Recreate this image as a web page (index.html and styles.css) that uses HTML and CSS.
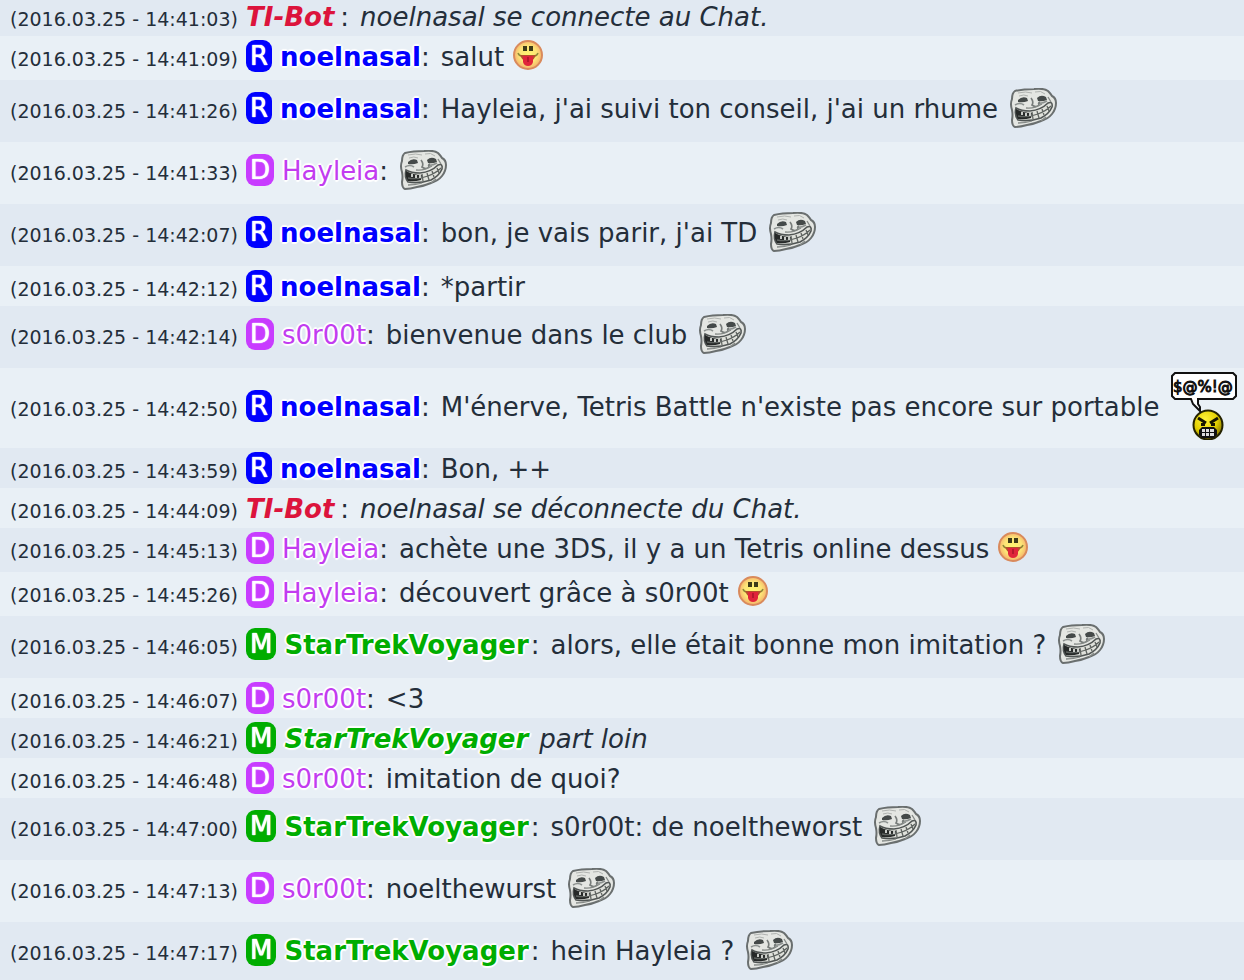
FILE: index.html
```html
<!DOCTYPE html>
<html lang="fr">
<head>
<meta charset="utf-8">
<meta name="viewport" content="width=device-width, initial-scale=1">
<title>Chat</title>
<link rel="stylesheet" href="styles.css">
</head>
<body>
<svg class="sprites" aria-hidden="true">
  <defs>
    <radialGradient id="skin" cx="50%" cy="48%" r="52%">
      <stop offset="0" stop-color="#fff56e"/><stop offset=".6" stop-color="#fce477"/><stop offset="1" stop-color="#f5b06a"/>
    </radialGradient>
    <radialGradient id="rage" cx="40%" cy="30%" r="70%">
      <stop offset="0" stop-color="#fff23a"/><stop offset=".6" stop-color="#e3d000"/><stop offset="1" stop-color="#8a7a00"/>
    </radialGradient>
  </defs>
  <symbol id="tongue" viewBox="0 0 30 30">
    <circle cx="15" cy="15" r="14" fill="url(#skin)" stroke="#d98a5c" stroke-width="2"/>
    <path d="M12 6v5M18 6v5" stroke="#3d3a18" stroke-width="4"/>
    <path d="M5 13q1 3 4 3h12q3 0 4-3" fill="none" stroke="#8f8a38" stroke-width="1.500"/>
    <path d="M7 15h16q-2 5-5 6h-6q-3-1-5-6z" fill="#b3502c"/>
    <path d="M10 16h10v6q-1 4-5 4t-5-4z" fill="#e0253a"/>
    <path d="M15 17v5" stroke="#a81428" stroke-width="1.500"/>
  </symbol>
  <symbol id="troll" viewBox="0 0 48 40">
    <path d="M5 3Q13 1 24 1Q34 0 38 3Q41 6 42 8Q46 10 46 15Q46 21 42 26Q38 31 31 33Q24 36 17 37Q10 39 5 39Q2 38 2 32Q3 27 2 22Q0 16 2 11Q2 5 5 3Z" fill="#e4e6e2" stroke="#6a6f6f" stroke-width="2"/>
    <path d="M8 5q8-2 14 0M25 4q6-2 10 2M9 8q5-2 9 0" fill="none" stroke="#b0b3b0"/>
    <path d="M8 12q4-4 9-2l1 3q-5 2-10 1zM27 10q4-4 9-1l1 3q-5 2-9 1z" fill="#454a49"/>
    <path d="M5 17q5-3 9 0M28 15q4 1 9-2" fill="none" stroke="#8d9290" stroke-width="1.600"/>
    <path d="M21 10q3 4 1 7q4 3 7 0q-1-2 1-3" fill="none" stroke="#777c7a" stroke-width="1.600"/>
    <path d="M6 20Q11 23 20 23Q31 22 38 15Q43 13 42 19Q39 26 31 30Q19 34 8 32Q4 27 6 20Z" fill="#dfe1db" stroke="#505554" stroke-width="1.600"/>
    <path d="M6 21q7 4 16 4l-1 5q-7 2-13 1q-3-4-2-10z" fill="#262928"/>
    <path d="M8 28q9 2 20-2q8-3 13-8M22 24l1 7M27 23l2 7M32 21l2 6M37 18l2 5" fill="none" stroke="#5f6461" stroke-width="1.300"/>
    <path d="M12 24v3M16 25v3M20 25v3" stroke="#c9ccc8" stroke-width="2"/>
    <path d="M16 20q8 1 16-4M38 9l3 5M8 35q8 0 14-2M31 33l5-4" fill="none" stroke="#858a87" stroke-width="1.300"/>
  </symbol>
</svg>
<ul class="chat">
  <li class="row"><time>(2016.03.25 - 14:41:03)</time><p class="line action"><b class="name bot">TI-Bot</b><span class="colon">:</span><span class="text">noelnasal se connecte au Chat.</span></p></li>
  <li class="row smile"><time>(2016.03.25 - 14:41:09)</time><p class="line"><span class="badge r">R</span><b class="name r">noelnasal</b><span class="colon">:</span><span class="text">salut</span></p><svg class="icon" role="img" aria-label=":P"><use href="#tongue"/></svg></li>
  <li class="row troll"><time>(2016.03.25 - 14:41:26)</time><p class="line"><span class="badge r">R</span><b class="name r">noelnasal</b><span class="colon">:</span><span class="text">Hayleia, j'ai suivi ton conseil, j'ai un rhume</span></p><svg class="icon" role="img" aria-label="troll"><use href="#troll"/></svg></li>
  <li class="row troll"><time>(2016.03.25 - 14:41:33)</time><p class="line"><span class="badge d">D</span><span class="name d">Hayleia</span><span class="colon">:</span></p><svg class="icon" role="img" aria-label="troll"><use href="#troll"/></svg></li>
  <li class="row troll"><time>(2016.03.25 - 14:42:07)</time><p class="line"><span class="badge r">R</span><b class="name r">noelnasal</b><span class="colon">:</span><span class="text">bon, je vais parir, j'ai TD</span></p><svg class="icon" role="img" aria-label="troll"><use href="#troll"/></svg></li>
  <li class="row"><time>(2016.03.25 - 14:42:12)</time><p class="line"><span class="badge r">R</span><b class="name r">noelnasal</b><span class="colon">:</span><span class="text">*partir</span></p></li>
  <li class="row troll"><time>(2016.03.25 - 14:42:14)</time><p class="line"><span class="badge d">D</span><span class="name d">s0r00t</span><span class="colon">:</span><span class="text">bienvenue dans le club</span></p><svg class="icon" role="img" aria-label="troll"><use href="#troll"/></svg></li>
  <li class="row swear"><time>(2016.03.25 - 14:42:50)</time><p class="line"><span class="badge r">R</span><b class="name r">noelnasal</b><span class="colon">:</span><span class="text">M'énerve, Tetris Battle n'existe pas encore sur portable</span></p>
    <svg class="icon" viewBox="0 0 66 68" role="img" aria-label="énervé">
      <circle cx="37" cy="53" r="14.500" fill="url(#rage)" stroke="#242200" stroke-width="2"/>
      <path d="M4 1h58l3 3v20l-3 3H27v5l2 3v4l-4-4-3-3-2-5H4l-3-3V4z" fill="#fff" stroke="#111" stroke-width="2"/>
      <text x="2" y="20" class="curse">$@%!@</text>
      <path d="M27 46l8 5M47 46l-8 5" stroke="#171500" stroke-width="3"/>
      <path d="M30 51h4v3h-4zM40 51h4v3h-4z" fill="#171500"/>
      <path d="M31 55h12l3 3v5l-3 3H31l-3-3v-5z" fill="#111"/>
      <path d="M31 57h3v3h-3zM35 57h3v3h-3zM39 57h4v3h-4zM31 61h3v3h-3zM35 61h3v3h-3zM39 61h4v3h-4z" fill="#ddd"/>
    </svg></li>
  <li class="row"><time>(2016.03.25 - 14:43:59)</time><p class="line"><span class="badge r">R</span><b class="name r">noelnasal</b><span class="colon">:</span><span class="text">Bon, ++</span></p></li>
  <li class="row"><time>(2016.03.25 - 14:44:09)</time><p class="line action"><b class="name bot">TI-Bot</b><span class="colon">:</span><span class="text">noelnasal se déconnecte du Chat.</span></p></li>
  <li class="row smile"><time>(2016.03.25 - 14:45:13)</time><p class="line"><span class="badge d">D</span><span class="name d">Hayleia</span><span class="colon">:</span><span class="text">achète une 3DS, il y a un Tetris online dessus</span></p><svg class="icon" role="img" aria-label=":P"><use href="#tongue"/></svg></li>
  <li class="row smile"><time>(2016.03.25 - 14:45:26)</time><p class="line"><span class="badge d">D</span><span class="name d">Hayleia</span><span class="colon">:</span><span class="text">découvert grâce à s0r00t</span></p><svg class="icon" role="img" aria-label=":P"><use href="#tongue"/></svg></li>
  <li class="row troll"><time>(2016.03.25 - 14:46:05)</time><p class="line"><span class="badge m">M</span><b class="name m">StarTrekVoyager</b><span class="colon">:</span><span class="text">alors, elle était bonne mon imitation ?</span></p><svg class="icon" role="img" aria-label="troll"><use href="#troll"/></svg></li>
  <li class="row"><time>(2016.03.25 - 14:46:07)</time><p class="line"><span class="badge d">D</span><span class="name d">s0r00t</span><span class="colon">:</span><span class="text">&lt;3</span></p></li>
  <li class="row"><time>(2016.03.25 - 14:46:21)</time><p class="line action"><span class="badge m">M</span><b class="name m">StarTrekVoyager</b><span class="text">part loin</span></p></li>
  <li class="row"><time>(2016.03.25 - 14:46:48)</time><p class="line"><span class="badge d">D</span><span class="name d">s0r00t</span><span class="colon">:</span><span class="text">imitation de quoi?</span></p></li>
  <li class="row troll"><time>(2016.03.25 - 14:47:00)</time><p class="line"><span class="badge m">M</span><b class="name m">StarTrekVoyager</b><span class="colon">:</span><span class="text">s0r00t: de noeltheworst</span></p><svg class="icon" role="img" aria-label="troll"><use href="#troll"/></svg></li>
  <li class="row troll"><time>(2016.03.25 - 14:47:13)</time><p class="line"><span class="badge d">D</span><span class="name d">s0r00t</span><span class="colon">:</span><span class="text">noelthewurst</span></p><svg class="icon" role="img" aria-label="troll"><use href="#troll"/></svg></li>
  <li class="row troll"><time>(2016.03.25 - 14:47:17)</time><p class="line"><span class="badge m">M</span><b class="name m">StarTrekVoyager</b><span class="colon">:</span><span class="text">hein Hayleia ?</span></p><svg class="icon" role="img" aria-label="troll"><use href="#troll"/></svg></li>
</ul>
</body>
</html>
```
FILE: styles.css
```css
html {
  height: 100%;
  overflow: hidden;
}
body {
  height: 100%;
  margin: 0;
  overflow: hidden;
  background: #e1e9f2;
  color: #242e3a;
  font: 26px/34px "DejaVu Sans", Verdana, sans-serif;
}
.sprites {
  position: absolute;
  width: 0;
  height: 0;
}
.chat {
  margin: -4px 0 0;
  padding: 0;
  list-style: none;
}
.row {
  --drop: 0px;
  display: flex;
  align-items: flex-start;
  padding: 4px 4px 2px 10px;
  background: #e1e9f2;
  white-space: nowrap;
}
.row:nth-child(even) {
  background: #e9f0f6;
}
.row time,
.row .line {
  margin: var(--drop) 0 0;
}
.row time {
  flex: none;
  width: 236px;
  padding-top: 6px;
  font-size: 19px;
  line-height: 26px;
}
.line {
  display: flex;
  align-items: flex-start;
}
.action {
  font-style: italic;
}
.badge {
  margin-right: 8px;
  padding: 0 4px;
  border-radius: 9px;
  color: #fff;
  font-style: normal;
  line-height: 32px;
  text-shadow: 0 0 1px #fff, 0 0 1px #fff;
}
.name {
  text-shadow: 2px 0 1px #fff, -2px 0 1px #fff, 0 2px 1px #fff, 0 -2px 1px #fff,
    1px 1px 1px #fff, -1px -1px 1px #fff;
}
.name.bot { margin-right: 6px; color: #dc143c; text-shadow: none; }
.name.r { color: #00f; }
.name.d { color: #c23cf0; }
.name.m { color: #00ad00; }
.name.m + .colon { margin-left: 2px; }
.badge.r { background: #00f; }
.badge.d { background: #c83cff; }
.badge.m { background: #00ad00; }
.colon {
  font-style: normal;
}
.text {
  margin-left: 11px;
}
.icon {
  flex: none;
  margin-left: 12px;
}
.smile { padding-bottom: 4px; }
.smile .icon { width: 30px; height: 30px; margin-bottom: 6px; margin-left: 9px; }
.troll { --drop: 4px; padding-top: 8px; padding-bottom: 14px; }
.troll .icon { width: 48px; height: 40px; }
.swear { --drop: 18px; padding-bottom: 8px; }
.swear .icon { width: 66px; height: 68px; }
.curse {
  font: 15px "DejaVu Sans", sans-serif;
  fill: #111;
  stroke: #111;
}
```
